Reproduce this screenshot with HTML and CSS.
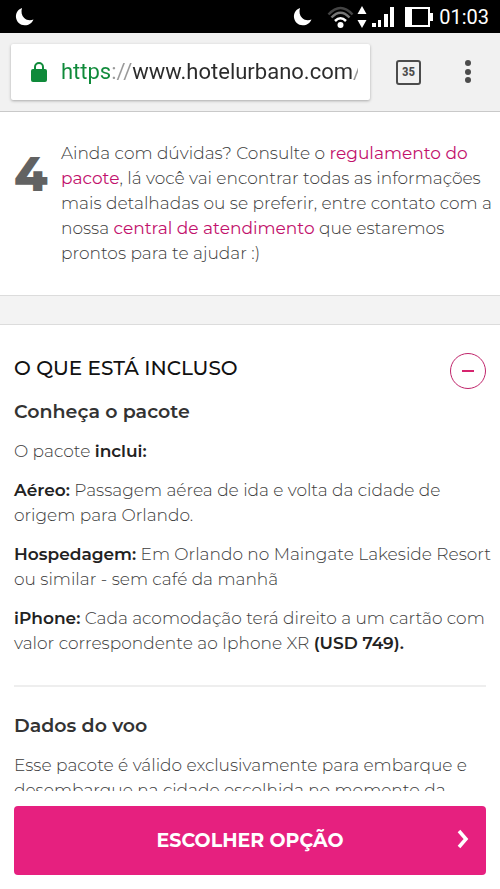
FILE: index.html
```html
<!DOCTYPE html>
<html lang="pt-BR">
<head>
<meta charset="utf-8">
<meta name="viewport" content="width=device-width, initial-scale=1">
<title>Hotel Urbano</title>
<link rel="stylesheet" href="styles.css">
</head>
<body>
<div class="status">
  <svg class="moon" width="20" height="20" viewBox="0 0 20 20" aria-hidden="true"><path d="M7 1C2.700 2.500.600 6.300 1 10.500c.500 4.500 4.200 7.700 8.600 7.800 4 .100 7.300-2.300 8.900-5.900-3.200 1.400-6.900.900-9.300-1.400C6.600 8.500 5.900 4.500 7 1z" fill="#fff"/></svg>
  <div class="status-icons">
    <svg class="moon" width="20" height="20" viewBox="0 0 20 20" aria-hidden="true"><path d="M7 1C2.700 2.500.600 6.300 1 10.500c.500 4.500 4.200 7.700 8.600 7.800 4 .100 7.300-2.300 8.900-5.900-3.200 1.400-6.900.900-9.300-1.400C6.600 8.500 5.900 4.500 7 1z" fill="#fff"/></svg>
    <svg class="wifi" width="27" height="24" viewBox="0 0 27 24" fill="none" stroke-width="2.500" aria-hidden="true"><path d="M1.500 9.500Q13.500-3.500 25.500 9.500" stroke="#444"/><path d="M4.500 12.500Q13.500 3 22.500 12.500" stroke="#777"/><path d="M8 16q5.500-5.500 11 0" stroke="#fff"/><circle cx="13.500" cy="20" r="3" fill="#fff"/></svg>
    <svg class="updown" width="10" height="24" viewBox="0 0 10 24" fill="#fff" aria-hidden="true"><path d="M5 1l4.500 8h-9zM5 23l4.500-8h-9z"/></svg>
    <svg class="signal" width="23" height="22" viewBox="0 0 23 22" fill="#fff" aria-hidden="true"><path d="M0 17h4v4H0zM6 14h3v7H6zM12 8h4v13h-4zM18 1h4v20h-4z"/></svg>
    <svg class="battery" width="28" height="20" viewBox="0 0 28 20" aria-hidden="true"><path d="M1 1h23v18H1z" fill="none" stroke="#fff" stroke-width="2"/><path d="M1 1h6v18H1zM24 6h4v8h-4z" fill="#fff"/></svg>
    <time class="clock">01:03</time>
  </div>
</div>
<header class="toolbar">
  <label class="address">
    <svg width="16" height="20" viewBox="0 0 16 20" aria-hidden="true"><path d="M4 8V5a4 4 0 0 1 8 0v3" fill="none" stroke="#0f8a3a" stroke-width="2"/><rect y="7" width="16" height="13" rx="2" fill="#0f8a3a"/></svg>
    <input class="url" type="text" aria-label="Endereço" value="https://www.hotelurbano.com/">
  </label>
  <button class="tabs" type="button" aria-label="Guias abertas">35</button>
  <button class="menu" type="button" aria-label="Menu"><svg width="6" height="24" viewBox="0 0 6 24" fill="#4c4c4c" aria-hidden="true"><circle cx="3" cy="3" r="3"/><circle cx="3" cy="12" r="3"/><circle cx="3" cy="20" r="3"/></svg></button>
</header>
<main class="content">
  <section class="step">
    <span class="number">4</span>
    <p>Ainda com dúvidas? Consulte o <a href="#regulamento">regulamento do pacote</a>, lá você vai encontrar todas as informações mais detalhadas ou se preferir, entre contato com a nossa <a href="#central">central de atendimento</a> que estaremos prontos para te ajudar :)</p>
  </section>
  <div class="band"></div>
  <section class="included">
    <div class="heading">
      <h2>O QUE ESTÁ INCLUSO</h2>
      <button class="toggle" type="button" aria-label="Recolher"><svg width="12" height="2" viewBox="0 0 12 2" aria-hidden="true"><path d="M0 0h12v2H0z" fill="#d6246e"/></svg></button>
    </div>
    <h3>Conheça o pacote</h3>
    <p>O pacote <b>inclui:</b></p>
    <p><b>Aéreo:</b> Passagem aérea de ida e volta da cidade de origem para Orlando.</p>
    <p><b>Hospedagem:</b> Em Orlando no Maingate Lakeside Resort ou similar - sem café da manhã</p>
    <p><b>iPhone:</b> Cada acomodação terá direito a um cartão com valor correspondente ao Iphone XR <b>(USD 749).</b></p>
    <hr>
    <h3>Dados do voo</h3>
    <p>Esse pacote é válido exclusivamente para embarque e desembarque na cidade escolhida no momento da</p>
  </section>
</main>
<footer class="action">
  <button class="choose" type="button"><span>ESCOLHER OPÇÃO</span><svg width="13" height="24" viewBox="0 0 13 24" aria-hidden="true"><path d="M3 2l7 8-7 8" fill="none" stroke="#fff" stroke-width="3.500"/></svg></button>
</footer>
</body>
</html>
```
FILE: styles.css
```css
* { box-sizing: border-box; }
body {
  margin: 0;
  height: 100vh;
  display: flex;
  flex-direction: column;
  background: #fff;
  color: #3c3c3c;
  font: 300 17px/25px Montserrat, Inter, sans-serif;
}
button { font: inherit; padding: 0; border: 0; background: none; cursor: pointer; }
svg { display: block; flex: none; }
p, h2, h3 { margin: 0; }

.status {
  flex: none;
  height: 33px;
  padding: 0 11px 0 15px;
  display: flex;
  align-items: center;
  justify-content: space-between;
  background: #000;
  color: #fff;
}
.status-icons { display: flex; align-items: center; }
.wifi { margin-left: 14px; }
.updown { margin-left: 3px; }
.signal { margin-left: 5px; }
.battery { margin-left: 10px; }
.clock { margin-left: 6px; font: 400 20px/32px Roboto, sans-serif; }

.toolbar {
  flex: none;
  height: 79px;
  padding: 0 16px 0 11px;
  display: flex;
  align-items: center;
  background: #f1f1f1;
  border-bottom: 1px solid #c9c9c9;
}
.address {
  flex: 1;
  min-width: 0;
  height: 56px;
  padding: 0 12px 0 20px;
  display: flex;
  align-items: center;
  gap: 14px;
  background: #fff;
  border-radius: 2px;
  box-shadow: 0 1px 3px rgba(0, 0, 0, .3);
}
.url {
  flex: 1;
  min-width: 0;
  padding: 0;
  border: 0;
  outline: 0;
  font: 400 22px/32px Roboto, sans-serif;
  color: transparent;
  background: linear-gradient(90deg, #0f8a3a 50px, #999 50px 71px, #2b2b2b 71px 291px, #999 291px);
  -webkit-background-clip: text;
  background-clip: text;
}
.tabs {
  width: 25px;
  height: 25px;
  margin-left: 26px;
  border: 2px solid #4c4c4c;
  border-radius: 3px;
  color: #4c4c4c;
  font: 700 13px/20px "Roboto Condensed", Roboto, sans-serif;
}
.menu { width: 32px; height: 40px; margin-left: 31px; display: grid; place-items: center; }

.content { flex: 1; min-height: 0; overflow-y: auto; scrollbar-width: none; }
.step {
  display: flex;
  padding: 29px 4px 29px 14px;
}
.number {
  flex: none;
  width: 47px;
  font-size: 48px;
  line-height: 66px;
  font-weight: 800;
  color: #626262;
}
.step a { color: #c2116c; text-decoration: none; font-weight: 400; }
.band {
  height: 30px;
  background: #f3f3f3;
  border: solid #dcdcdc;
  border-width: 1px 0;
}
.included { padding: 28px 4px 0 14px; }
.heading { display: flex; justify-content: space-between; height: 46px; margin-right: 10px; }
h2 { font-size: 20px; line-height: 30px; font-weight: 500; color: #111; }
h3 { font-size: 19px; line-height: 26px; font-weight: 600; color: #333; margin-bottom: 14px; }
.toggle {
  width: 36px;
  height: 36px;
  border: 1px solid #c0256b;
  border-radius: 50%;
  display: grid;
  place-items: center;
}
.included p { margin-bottom: 14px; }
.included b { font-weight: 600; color: #222; }
hr { margin: 29px 10px 26px 0; border: 0; border-top: 2px solid #eee; }

.action { flex: none; padding: 15px 14px 14px; background: #fff; }
.choose {
  width: 100%;
  height: 69px;
  padding: 0 17px;
  display: grid;
  grid-template-columns: 13px 1fr 13px;
  align-items: center;
  border-radius: 4px;
  background: #e6207f;
  color: #fff;
  font-size: 19px;
  font-weight: 700;
}
.choose span { grid-column: 2; }
```
